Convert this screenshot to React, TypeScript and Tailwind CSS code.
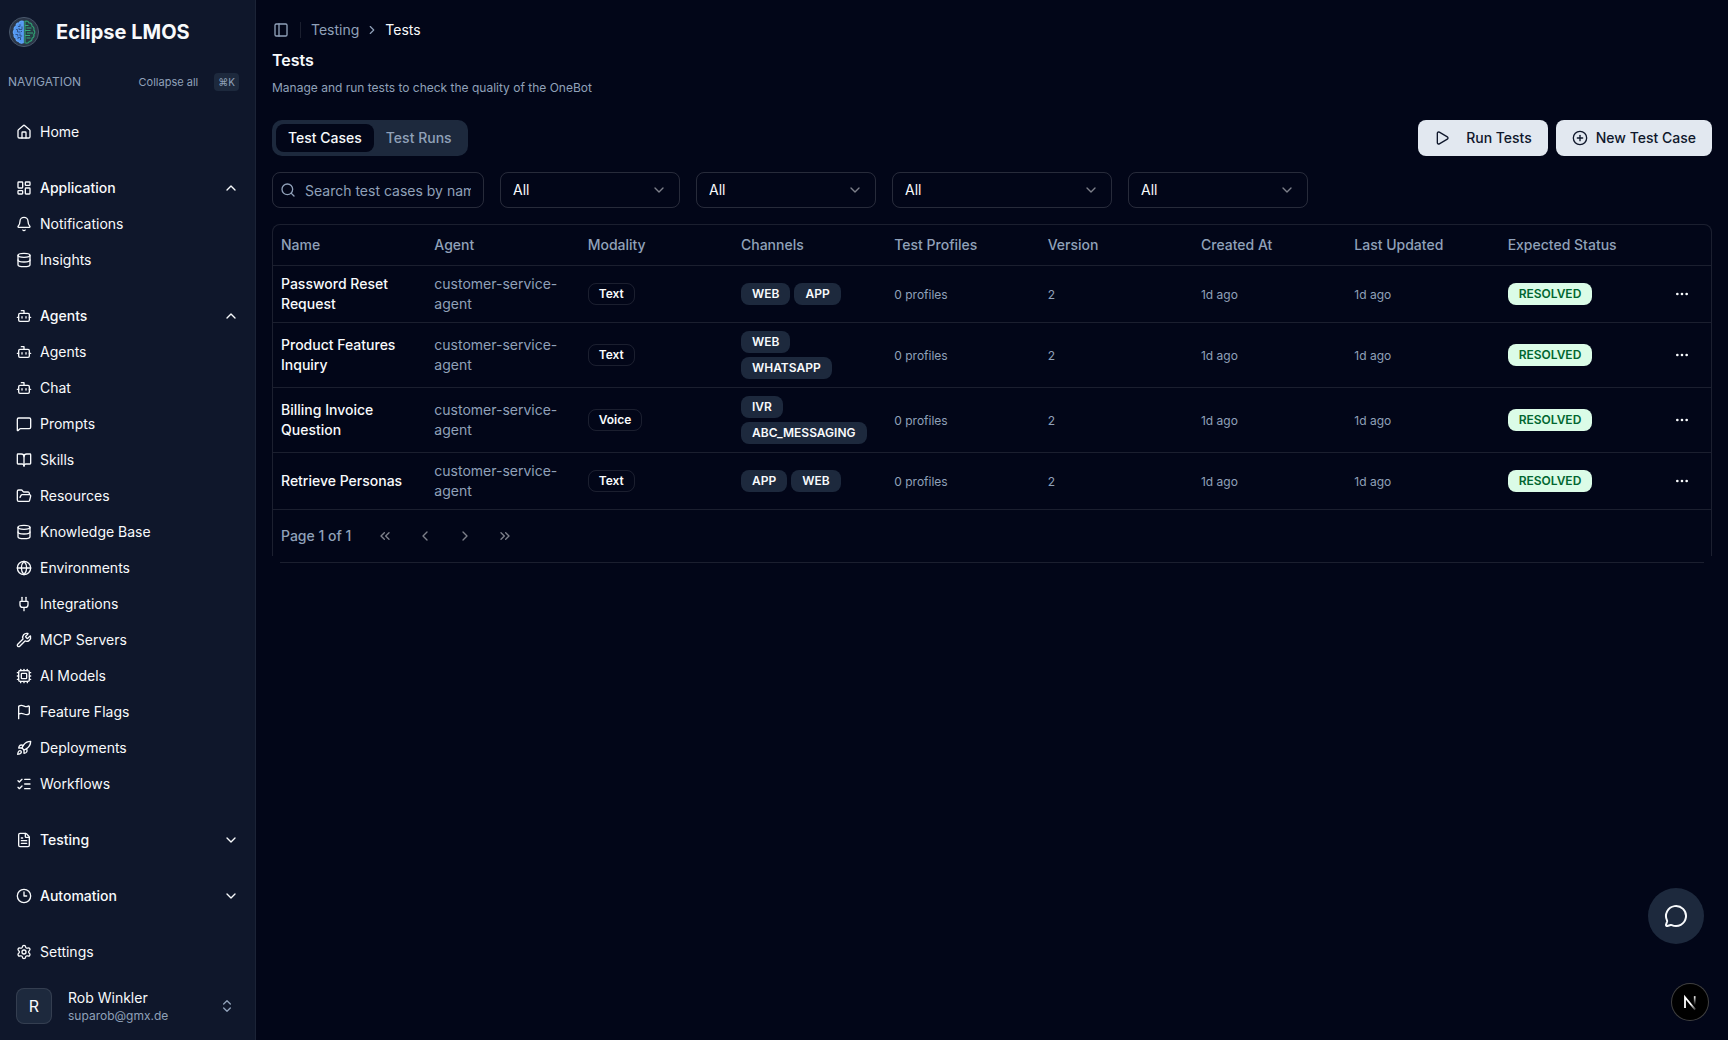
import React from 'react';
import {
  Bell,
  BookOpen,
  Bot,
  ChevronDown,
  ChevronLeft,
  ChevronRight,
  ChevronUp,
  ChevronsLeft,
  ChevronsRight,
  ChevronsUpDown,
  CirclePlus,
  Clock3,
  Cpu,
  Database,
  Ellipsis,
  FileText,
  Flag,
  FolderOpen,
  Globe,
  House,
  LayoutDashboard,
  ListChecks,
  MessageCircle,
  MessageSquare,
  PanelLeft,
  Play,
  Plug,
  Rocket,
  Search,
  Settings,
  Wrench,
  type LucideIcon,
} from 'lucide-react';

type NavItem = { label: string; icon: LucideIcon };
type NavGroup = { title?: NavItem; open?: boolean; items: NavItem[] };

const navGroups: NavGroup[] = [
  { items: [{ label: 'Home', icon: House }] },
  {
    title: { label: 'Application', icon: LayoutDashboard },
    open: true,
    items: [
      { label: 'Notifications', icon: Bell },
      { label: 'Insights', icon: Database },
    ],
  },
  {
    title: { label: 'Agents', icon: Bot },
    open: true,
    items: [
      { label: 'Agents', icon: Bot },
      { label: 'Chat', icon: Bot },
      { label: 'Prompts', icon: MessageSquare },
      { label: 'Skills', icon: BookOpen },
      { label: 'Resources', icon: FolderOpen },
      { label: 'Knowledge Base', icon: Database },
      { label: 'Environments', icon: Globe },
      { label: 'Integrations', icon: Plug },
      { label: 'MCP Servers', icon: Wrench },
      { label: 'AI Models', icon: Cpu },
      { label: 'Feature Flags', icon: Flag },
      { label: 'Deployments', icon: Rocket },
      { label: 'Workflows', icon: ListChecks },
    ],
  },
  { title: { label: 'Testing', icon: FileText }, items: [] },
  { title: { label: 'Automation', icon: Clock3 }, items: [] },
  { items: [{ label: 'Settings', icon: Settings }] },
];

const filters = [
  { name: 'Modality', width: 'w-[180px]' },
  { name: 'Channel', width: 'w-[180px]' },
  { name: 'Test profile', width: 'w-[220px]' },
  { name: 'Status', width: 'w-[180px]' },
];

const columns = [
  'Name',
  'Agent',
  'Modality',
  'Channels',
  'Test Profiles',
  'Version',
  'Created At',
  'Last Updated',
  'Expected Status',
];

const rows = [
  { name: 'Password Reset Request', modality: 'Text', channels: ['WEB', 'APP'] },
  { name: 'Product Features Inquiry', modality: 'Text', channels: ['WEB', 'WHATSAPP'] },
  { name: 'Billing Invoice Question', modality: 'Voice', channels: ['IVR', 'ABC_MESSAGING'] },
  { name: 'Retrieve Personas', modality: 'Text', channels: ['APP', 'WEB'] },
];

const pagers: NavItem[] = [
  { label: 'First page', icon: ChevronsLeft },
  { label: 'Previous page', icon: ChevronLeft },
  { label: 'Next page', icon: ChevronRight },
  { label: 'Last page', icon: ChevronsRight },
];

function BrainLogo() {
  return (
    <svg viewBox="0 0 32 32" className="size-8 shrink-0" fill="none" aria-hidden="true">
      <circle cx="16" cy="16" r="14.6" fill="#2b3647" stroke="#48566a" strokeWidth="1" />
      <path
        d="M15.2 5.400c-1.800-.9-3.600 0-4 1.500-2-.1-3.300 1.400-3 3.100-1.700.7-2.600 2.400-1.900 4-1.300 1.300-1.300 3.200 0 4.300-.6 1.700.1 3.300 1.700 4-.2 1.700 1 3.100 2.800 3.200.7 1.500 2.700 2.200 4.400 1.300z"
        fill="#5397f0"
        stroke="#60a5fa"
        strokeWidth="1.2"
      />
      <path
        d="M12 8.200v2.300h-2M14 10.500v3h-3v-1.500M8 13.500h1.500v2.500h3M7.500 18.500h2.300v2M12 17.500v2.500h2.200M14 15.500h-1M10 23v-1.500h2.500V24"
        stroke="#2c4e80"
        strokeWidth=".9"
      />
      <path
        d="M17 5.400c1.800-.9 3.500 0 3.900 1.500 2-.1 3.300 1.400 3 3.100 1.700.7 2.600 2.400 1.900 4 1.300 1.300 1.300 3.200 0 4.300.6 1.700-.1 3.300-1.700 4 .2 1.700-1 3.100-2.800 3.200-.7 1.500-2.600 2.200-4.300 1.300z"
        fill="#263c45"
        stroke="#2f9e73"
        strokeWidth="1.2"
      />
      <path
        d="M17 9.500h3.500M18.500 12h5M17 14.500h5.500M19 17h6M17 19.500h5M18.500 22h4"
        stroke="#34a97c"
        strokeWidth="1"
      />
    </svg>
  );
}

function NextMark() {
  return (
    <svg viewBox="0 0 40 40" className="size-10 shrink-0" fill="none" aria-hidden="true">
      <defs>
        <linearGradient id="diag" x1="21" y1="22" x2="26" y2="28.500" gradientUnits="userSpaceOnUse">
          <stop stopColor="#fff" />
          <stop offset="1" stopColor="#fff" stopOpacity="0.1" />
        </linearGradient>
        <linearGradient id="stem" x1="25" y1="14" x2="25" y2="23" gradientUnits="userSpaceOnUse">
          <stop stopColor="#fff" />
          <stop offset="1" stopColor="#fff" stopOpacity="0" />
        </linearGradient>
      </defs>
      <path d="M15 26V15.300L25.200 27.600" stroke="url(#diag)" strokeWidth="1.800" />
      <path d="M24.700 14.200v8.800" stroke="url(#stem)" strokeWidth="1.700" />
    </svg>
  );
}

function Sidebar() {
  return (
    <aside className="flex w-64 shrink-0 flex-col border-r border-white/5 bg-slate-900 text-slate-50">
      <div className="flex items-center gap-4 px-2 pt-4">
        <BrainLogo />
        <span className="text-xl font-bold">Eclipse LMOS</span>
      </div>
      <div className="mt-6 flex h-5 items-center px-2 text-slate-400">
        <span className="text-xs">NAVIGATION</span>
        <div className="ml-auto flex items-center gap-4 pr-2">
          <button type="button" className="text-[11px]">
            Collapse all
          </button>
          <kbd className="flex h-[18px] items-center rounded bg-slate-800 px-1 font-['Inter',sans-serif] text-[10px]">
            ⌘K
          </kbd>
        </div>
      </div>
      <nav className="mt-6 flex flex-col gap-6 px-2">
        {navGroups.map((group, i) => (
          <div key={i} className="flex flex-col gap-1">
            {group.title && (
              <button
                type="button"
                aria-expanded={!!group.open}
                className="flex h-8 items-center gap-2 rounded-md px-2 text-left text-sm font-medium"
              >
                <group.title.icon className="size-4" />
                <span className="flex-1">{group.title.label}</span>
                {group.open ? <ChevronUp className="size-4" /> : <ChevronDown className="size-4" />}
              </button>
            )}
            {group.items.map((item) => (
              <a key={item.label} href="#" className="flex h-8 items-center gap-2 rounded-md px-2 text-sm">
                <item.icon className="size-4" />
                <span>{item.label}</span>
              </a>
            ))}
          </div>
        ))}
      </nav>
      <button type="button" className="mt-auto flex items-center gap-4 p-4 pr-5 text-left">
        <span className="flex size-9 items-center justify-center rounded-lg border border-white/10 bg-slate-800 text-base">
          R
        </span>
        <span className="flex flex-1 flex-col">
          <span className="text-sm leading-5">Rob Winkler</span>
          <span className="text-xs leading-4 text-slate-400">suparob@gmx.de</span>
        </span>
        <ChevronsUpDown className="size-4 text-slate-400" />
      </button>
    </aside>
  );
}

function TestTable() {
  return (
    <div>
      <div className="overflow-hidden rounded-t-lg border border-b-0 border-white/10">
        <table className="w-full table-fixed text-sm">
          <colgroup>
            {columns.map((c) => (
              <col key={c} />
            ))}
            <col className="w-[58px]" />
          </colgroup>
          <thead>
            <tr className="border-b border-white/10">
              {columns.map((c) => (
                <th key={c} scope="col" className="h-10 px-2 text-left font-medium whitespace-nowrap text-slate-400">
                  {c}
                </th>
              ))}
              <th />
            </tr>
          </thead>
          <tbody>
            {rows.map((row) => (
              <tr key={row.name} className="border-b border-white/10 text-slate-400">
                <td className="p-2 font-medium text-slate-50">{row.name}</td>
                <td className="p-2">customer-service-agent</td>
                <td className="p-2">
                  <span className="flex w-fit rounded-lg border border-white/10 px-2.5 py-0.5 text-xs font-semibold text-slate-50">
                    {row.modality}
                  </span>
                </td>
                <td className="p-2">
                  <div className="flex flex-wrap gap-1">
                    {row.channels.map((ch) => (
                      <span
                        key={ch}
                        className="rounded-lg border border-transparent bg-slate-800 px-2.5 py-0.5 text-xs font-semibold text-slate-50"
                      >
                        {ch}
                      </span>
                    ))}
                  </div>
                </td>
                <td className="p-2">
                  <span className="text-xs">0 profiles</span>
                </td>
                <td className="p-2">
                  <span className="text-xs">2</span>
                </td>
                <td className="p-2">
                  <span className="text-xs">1d ago</span>
                </td>
                <td className="p-2">
                  <span className="text-xs">1d ago</span>
                </td>
                <td className="p-2">
                  <span className="flex w-fit rounded-lg border border-transparent bg-green-100 px-2.5 py-0.5 text-xs font-semibold text-green-800">
                    RESOLVED
                  </span>
                </td>
                <td>
                  <button
                    type="button"
                    aria-label={`Actions for ${row.name}`}
                    className="mx-auto flex size-8 items-center justify-center text-slate-50"
                  >
                    <Ellipsis className="size-4" />
                  </button>
                </td>
              </tr>
            ))}
          </tbody>
        </table>
        <div className="flex items-center gap-[18px] px-2 pt-2.5 pb-1 text-sm font-medium text-slate-400">
          <span>Page 1 of 1</span>
          <div className="flex gap-2">
            {pagers.map((p) => (
              <button
                key={p.label}
                type="button"
                disabled
                aria-label={p.label}
                className="flex size-8 items-center justify-center text-slate-50 opacity-50"
              >
                <p.icon className="size-4" />
              </button>
            ))}
          </div>
        </div>
      </div>
      <div className="mx-2 mt-1.5 h-px bg-white/10" />
    </div>
  );
}

export default function App() {
  return (
    <div className="flex min-h-screen bg-slate-950 font-['Inter',sans-serif] text-slate-50">
      <Sidebar />
      <main className="min-w-0 flex-1 px-4 pt-5">
        <div className="flex h-5 items-center text-sm">
          <button
            type="button"
            aria-label="Toggle sidebar"
            className="flex size-[18px] items-center justify-center text-slate-400"
          >
            <PanelLeft className="size-4" />
          </button>
          <span className="mx-2.5 h-4 w-px bg-white/10" />
          <nav aria-label="Breadcrumb" className="flex items-center gap-1.5">
            <a href="#" className="text-slate-400">
              Testing
            </a>
            <ChevronRight className="size-3.5 text-slate-400" />
            <span aria-current="page">Tests</span>
          </nav>
        </div>
        <h1 className="mt-2 text-base font-semibold">Tests</h1>
        <p className="mt-2 text-xs text-slate-400">Manage and run tests to check the quality of the OneBot</p>

        <div className="mt-6 flex items-center justify-between">
          <div role="tablist" className="flex h-9 rounded-[10px] bg-slate-800 p-1 text-sm font-medium">
            <button type="button" role="tab" aria-selected="true" className="rounded-lg bg-slate-950 px-3">
              Test Cases
            </button>
            <button type="button" role="tab" aria-selected="false" className="rounded-lg px-3 text-slate-400">
              Test Runs
            </button>
          </div>
          <div className="flex gap-2 text-sm font-medium text-slate-900">
            <button type="button" className="flex h-9 items-center gap-4 rounded-lg bg-slate-200 px-4">
              <Play className="size-4" />
              Run Tests
            </button>
            <button type="button" className="flex h-9 items-center gap-2 rounded-lg bg-slate-200 px-4">
              <CirclePlus className="size-4" />
              New Test Case
            </button>
          </div>
        </div>

        <div className="mt-4 flex flex-wrap gap-4">
          <label className="relative block w-[212px]">
            <Search className="absolute top-2.5 left-2 size-4 text-slate-400" />
            <input
              type="text"
              aria-label="Search test cases"
              placeholder="Search test cases by name..."
              className="h-9 w-full rounded-lg border border-white/15 bg-transparent pr-3 pl-8 text-sm placeholder:text-slate-400"
            />
          </label>
          {filters.map((f) => (
            <label key={f.name} className={`relative block ${f.width}`}>
              <select
                aria-label={f.name}
                className="h-9 w-full appearance-none rounded-lg border border-white/15 bg-transparent px-3 text-sm"
              >
                <option>All</option>
              </select>
              <ChevronDown className="pointer-events-none absolute top-2.5 right-[13px] size-4 opacity-50" />
            </label>
          ))}
        </div>

        <div className="mt-4">
          <TestTable />
        </div>
      </main>

      <button
        type="button"
        aria-label="Open chat"
        className="fixed right-6 bottom-24 flex size-14 items-center justify-center rounded-full bg-slate-800"
      >
        <MessageCircle className="size-6" />
      </button>
      <button
        type="button"
        aria-label="Open developer tools"
        className="fixed right-5 bottom-5 flex size-9 items-center justify-center rounded-full bg-black ring-1 ring-neutral-700"
      >
        <NextMark />
      </button>
    </div>
  );
}
